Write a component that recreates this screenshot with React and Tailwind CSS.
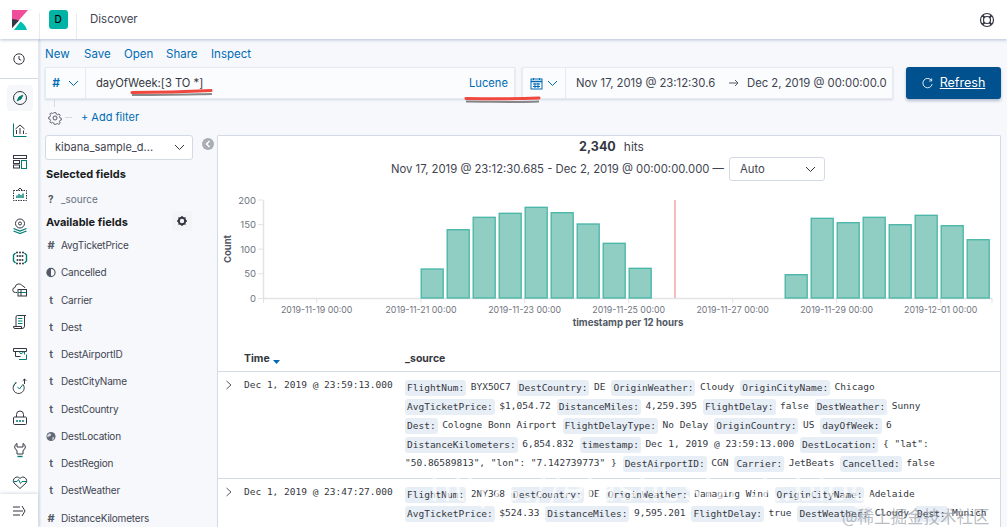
import React from "react";

const D = "#343741";
const T = "#017d73";

const I = ({ children, active }) => (
  <div className="w-[39px] h-[32px] flex items-center justify-center shrink-0">
    <div className={"w-[26px] h-[26px] rounded flex items-center justify-center " + (active ? "bg-[#f5f7fa]" : "")}>
      <svg width="16" height="16" viewBox="0 0 16 16" fill="none" stroke={D} strokeWidth="1">{children}</svg>
    </div>
  </div>
);

const navIcons = [
  <><circle cx="8" cy="8" r="6.5" /><path d="M10.8 5.2 9 9 5.2 10.8 7 7z" fill={T} stroke={T} /></>,
  <><path d="M1.5 1.5v13h13" stroke={T} /><path d="M3.5 7 8 3l4.5 4" /><path d="M4.5 12V8M8 12V6M11.5 12V8.5M14 12v-1" /></>,
  <><rect x="1.5" y="1.5" width="13" height="3" /><rect x="1.5" y="6.5" width="6" height="3" /><rect x="1.5" y="11" width="6" height="3" /><rect x="9.5" y="6.5" width="5" height="8" stroke={T} /></>,
  <><rect x="1.5" y="4.5" width="13" height="10" strokeDasharray="1.5 1" /><path d="M5.5 4.5 8 2l2.5 2.5" /><path d="M5 12V9.5M7 12V8M9 12V9M11 12V7.5" stroke={T} strokeWidth="1.4" /></>,
  <><circle cx="8" cy="5.5" r="4.5" /><circle cx="8" cy="5.5" r="1.5" /><path d="M1.5 10.5 8 13l6.5-2.5M1.5 13 8 15.5l6.5-2.5" stroke={T} strokeWidth="1.3" /></>,
  <><path d="M3.5 3 1.5 5v6l2 2M12.5 3l2 2v6l-2 2" stroke={T} strokeWidth="1.4" /><path d="M5 2.5h.01M8 2.5h.01M11 2.5h.01M5.5 6h.01M8 6h.01M10.5 6h.01M5.5 10h.01M8 10h.01M10.5 10h.01M5 13.5h.01M8 13.5h.01M11 13.5h.01" strokeWidth="2" strokeLinecap="round" /></>,
  <><path d="M5 10.5H3.5a2.5 2.5 0 0 1-.5-5A4 4 0 0 1 10.5 4a3 3 0 0 1 2.5 2" /><rect x="6" y="7.5" width="8.5" height="6.5" /><path d="M6 10.5h8.5" stroke={T} /><path d="M9 7.5V14" /></>,
  <><path d="M4 12.5V3a1.5 1.5 0 0 1 1.5-1.5H14" /><path d="M12.5 1.5V12a2.5 2.5 0 0 1-2.5 2.5H3a1.5 1.5 0 0 1-1.5-1.5v-.5H9.5V14" /><path d="M6 4.5h4.5M6 7h4.5M6 9.5h4.5" stroke={T} /></>,
  <><path d="M1.5 2.5h13v3h-13z" /><path d="M3.5 5.5v5h5" /><path d="M12.5 5.5v3" stroke={T} /><path d="M7 5.5 9 8l3-2.5M7 13.5h7.5v-5" stroke={T} /></>,
  <><path d="M11 5.5a6 6 0 1 1-6.500-1.500" transform="translate(.5 1) scale(.93)" /><path d="M2 8a5 5 0 0 1 2-4" stroke={T} strokeDasharray="1.5 1.2" /><path d="M5.500 9 7.500 11l3-4" stroke={T} /><path d="M12.500 6V1M10.700 2.800l1.800-1.800 1.800 1.800" /></>,
  <><rect x="1.5" y="7" width="13" height="7.5" rx="1" /><path d="M4.5 7V4.5a3.5 3.5 0 0 1 7 0V7" /><path d="M5 11h.01M8 11h.01M11 11h.01" stroke={T} strokeWidth="2" strokeLinecap="round" /></>,
  <><path d="M5 1.5C2 3 2 7 5 8.5V12h6V8.5c3-1.5 3-5.5 0-7V5H5z" /><path d="M5.5 14.5h5" stroke={T} strokeWidth="1.4" /></>,
  <><path d="M8 14.5 2 9C-.5 5.5 4.5 .5 8 4.5 11.500 .5 16.500 5.500 14 9z" /><path d="M1.500 7.500H5l1.500-2 2 4 1.500-2h5" stroke={T} /></>,
];

const fields = [
  ["#", "AvgTicketPrice"], ["h", "Cancelled"], ["t", "Carrier"], ["t", "Dest"], ["t", "DestAirportID"], ["t", "DestCityName"],
  ["t", "DestCountry"], ["g", "DestLocation"], ["t", "DestRegion"], ["t", "DestWeather"], ["#", "DistanceKilometers"],
];

const FieldIcon = ({ k }) => {
  if (k === "h") return <svg width="11" height="11" viewBox="0 0 11 11"><circle cx="5.500" cy="5.500" r="4.500" fill="none" stroke="#535966" strokeWidth="1.300" /><path d="M5.500 1a4.500 4.500 0 0 0 0 9z" fill="#535966" /></svg>;
  if (k === "g") return <svg width="11" height="11" viewBox="0 0 11 11"><circle cx="5.500" cy="5.500" r="5" fill="#636976" /><path d="M3 2.500c2-1 3 0 2.500 1.500S3 5 2.500 6 1 5 1.500 4zM7 6.500l2-.5-.5 2.500L7 9.500z" fill="#d5d8de" /></svg>;
  return <span className={"text-[11px] leading-none text-[#535966] " + (k === "#" ? "font-bold" : "font-semibold")}>{k}</span>;
};

const bars = [
  [420.7, 269], [446.7, 229.7], [472.7, 217.3], [498.7, 213.3], [524.7, 207.3], [550.7, 212.7], [576.7, 224], [602.7, 243.3], [628.7, 268.3],
  [784.7, 274.7], [810.7, 218.3], [836.7, 222.7], [862.7, 217.3], [888.7, 224.7], [914.7, 215.3], [940.7, 225.7], [966.7, 239.7],
];
const xt = [[316.7, "2019-11-19 00:00"], [421, "2019-11-21 00:00"], [524.7, "2019-11-23 00:00"], [628.7, "2019-11-25 00:00"], [732.7, "2019-11-27 00:00"], [836.7, "2019-11-29 00:00"], [940.7, "2019-12-01 00:00"]];
const yt = [[200, "200"], [224.600, "150"], [249.200, "100"], [273.800, "50"], [298.500, "0"]];

const Chart = () => (
  <svg width="782" height="150" viewBox="218 190 782 150" className="block" style={{ fontFamily: "Inter, sans-serif" }}>
    <text transform="translate(231,249) rotate(-90)" textAnchor="middle" fontSize="9.500" fontWeight="700" fill="#535966">Count</text>
    {yt.map(([y, l]) => (
      <g key={l}>
        <text x="256" y={y + 3.500} textAnchor="end" fontSize="9.500" fill="#6f7480">{l}</text>
        <path d={`M258 ${y}h5`} stroke="#e3e3e3" />
      </g>
    ))}
    <path d="M263.500 200v98.500H992" stroke="#e3e3e3" strokeWidth="1.500" fill="none" />
    {xt.map(([x, l]) => (
      <g key={l}>
        <path d={`M${x} 298v5`} stroke="#e3e3e3" />
        <text x={x} y="312.500" textAnchor="middle" fontSize="8.800" fill="#6f7480">{l}</text>
      </g>
    ))}
    <path d="M263.500 298v5M992 298v5" stroke="#e3e3e3" />
    {bars.map(([x, t]) => (
      <rect key={x} x={x + 0.500} y={t} width="22" height={298 - t} fill="#90cdc3" stroke="#47b5a7" strokeWidth="1.300" />
    ))}
    <rect x="674" y="200" width="2" height="98" fill="#f4bcbc" />
    <text x="628" y="326" textAnchor="middle" fontSize="9.700" fontWeight="700" fill="#535966">timestamp per 12 hours</text>
  </svg>
);

const Line = ({ items }) => (
  <div className="flex items-center h-[19px] whitespace-pre">
    {items.map((it, i) =>
      it[0] === "" ? (
        <span key={i} className="mr-[6px]">{it[1]}</span>
      ) : (
        <React.Fragment key={i}>
          <span className="bg-[#e8eef5] rounded-[3px] px-[2px] h-[16px] leading-[16px] mr-[4.500px] text-[#343741]">{it[0]}:</span>
          {it[1] && <span className="mr-[6px]">{it[1]}</span>}
        </React.Fragment>
      )
    )}
  </div>
);

const row1 = [
  [["FlightNum", "BYX5OC7"], ["DestCountry", "DE"], ["OriginWeather", "Cloudy"], ["OriginCityName", "Chicago"]],
  [["AvgTicketPrice", "$1,054.72"], ["DistanceMiles", "4,259.395"], ["FlightDelay", "false"], ["DestWeather", "Sunny"]],
  [["Dest", "Cologne Bonn Airport"], ["FlightDelayType", "No Delay"], ["OriginCountry", "US"], ["dayOfWeek", "6"]],
  [["DistanceKilometers", "6,854.832"], ["timestamp", "Dec 1, 2019 @ 23:59:13.000"], ["DestLocation", '{ "lat":']],
  [["", '"50.86589813", "lon": "7.142739773" }'], ["DestAirportID", "CGN"], ["Carrier", "JetBeats"], ["Cancelled", "false"]],
];
const row2 = [
  [["FlightNum", "2NY3G8"], ["DestCountry", "DE"], ["OriginWeather", "Damaging Wind"], ["OriginCityName", "Adelaide"]],
  [["AvgTicketPrice", "$524.33"], ["DistanceMiles", "9,595.201"], ["FlightDelay", "true"], ["DestWeather", "Cloudy"], ["Dest", "Munich"]],
];

const Row = ({ time, lines, cls }) => (
  <div className={"flex " + cls} style={{ fontFamily: "'DejaVu Sans Mono', monospace" }}>
    <div className="w-[26px] shrink-0 pl-[7px] pt-[8px]">
      <svg width="8" height="10" viewBox="0 0 8 10" fill="none" stroke="#535966"><path d="M1.500 1 6 5 1.500 9" /></svg>
    </div>
    <div className="w-[161px] shrink-0 pt-[6px] leading-[14px]">{time}</div>
    <div className="pt-[6px] flex-1 min-w-0">
      {lines.map((l, i) => <Line key={i} items={l} />)}
    </div>
  </div>
);

const Chev = ({ c }) => (
  <svg width="11" height="7" viewBox="0 0 11 7" fill="none" stroke={c} className="shrink-0"><path d="M1 1l4.500 4.500L10 1" /></svg>
);

export default function App() {
  return (
    <div className="relative w-[1007px] h-[527px] overflow-hidden flex flex-col bg-[#f6f8fc] text-[#343741]" style={{ fontFamily: "Inter, 'Noto Sans CJK SC', sans-serif" }}>
      <header className="h-[39px] shrink-0 bg-white flex items-stretch shadow-[0_1px_3px_rgba(100,120,160,0.45)] relative z-10">
        <div className="w-[39px] flex items-center justify-center">
          <svg width="16" height="20" viewBox="0 0 16 20">
            <path d="M0 0h16L0 18z" fill="#f04e98" />
            <path d="M0 9v9l7-7.500Q4 9.200 0 9z" fill="#343741" />
            <path d="M2 20 8.500 11.500Q13.500 14.500 15 20z" fill="#00bfb3" />
          </svg>
        </div>
        <div className="w-[38px] flex items-center justify-center border-x border-[#e6ebf2] mt-[13px]">
          <div className="w-[19px] h-[19px] -mt-[13px] rounded-[3px] bg-[#00b3a4] flex items-center justify-center text-[10px] font-medium text-black">D</div>
        </div>
        <div className="pl-[13px] flex items-center text-[11.500px] text-[#3f4450]">Discover</div>
        <div className="ml-auto mr-[12px] flex items-center">
          <svg width="16" height="16" viewBox="0 0 16 16" fill="none" stroke="#343741" strokeWidth="1.200">
            <circle cx="8" cy="8" r="6.500" /><circle cx="8" cy="8" r="3.500" />
            <path d="M3.500 3.500 5.500 5.500M12.500 3.500 10.500 5.500M3.500 12.500 5.500 10.500M12.500 12.500 10.500 10.500" strokeWidth="2" />
          </svg>
        </div>
      </header>

      <div className="flex-1 flex min-h-0">
        <aside className="relative w-[39px] shrink-0 bg-white border-r border-[#e4e8f0] flex flex-col shadow-[1px_0_2px_rgba(100,120,160,0.2)] z-[5]">
          <div className="h-[40px] shrink-0 flex items-center justify-center border-b border-[#d3dae6]">
            <svg width="12" height="12" viewBox="0 0 12 12" fill="none" stroke={D}><circle cx="6" cy="6" r="5.200" /><path d="M6 3v3.200l2.200 1" /></svg>
          </div>
          <div className="pt-[3px] flex flex-col">
            {navIcons.map((c, i) => <I key={i} active={i === 0}>{c}</I>)}
          </div>
          <div className="absolute bottom-0 left-0 w-[38px] h-[33px] bg-white flex items-center justify-center shadow-[0_-1px_3px_rgba(100,120,160,0.25)]">
            <svg width="14" height="12" viewBox="0 0 14 12" fill="none" stroke={D}><path d="M1 2h7M1 6h10M1 10h7M10 1l3 5-3 5" /></svg>
          </div>
        </aside>

        <main className="flex-1 min-w-0 flex flex-col pl-[6px] pr-[6px]">
          <nav className="h-[28px] shrink-0 flex items-end pb-[5px] text-[11.500px] text-[#006bb4] leading-[16px]">
            <span className="w-[39px]">New</span><span className="w-[40px]">Save</span><span className="w-[42px]">Open</span><span className="w-[45px]">Share</span><span>Inspect</span>
          </nav>

          <div className="h-[32px] shrink-0 flex">
            <div className="w-[470px] flex bg-[#fbfcfd] border border-[#e6eaf1] shadow-[0_1px_2px_rgba(100,120,160,0.25)]">
              <div className="w-[40px] shrink-0 flex items-center justify-center gap-[8px] border-r border-[#e6eaf1] text-[#006bb4] text-[12px] font-semibold">
                <span>#</span>
                <Chev c="#006bb4" />
              </div>
              <div className="flex-1 pl-[10px] flex items-center text-[11.200px]">dayOfWeek:[3 TO *]</div>
              <div className="pr-[6px] flex items-center text-[11.200px] text-[#006bb4]">Lucene</div>
            </div>
            <div className="ml-[7px] w-[371px] flex bg-[#fbfcfd] border border-[#e6eaf1] shadow-[0_1px_2px_rgba(100,120,160,0.25)]">
              <div className="w-[43px] shrink-0 flex items-center justify-center gap-[4px] border-r border-[#e6eaf1]">
                <svg width="13" height="13" viewBox="0 0 13 13" fill="none" stroke="#006bb4"><rect x="1" y="2" width="11" height="10" /><path d="M1 4.500h11" strokeWidth="1.500" /><path d="M3.500 1v2M9.500 1v2M3 7h7M3 9.500h7M5 6v5M8 6v5" /></svg>
                <Chev c="#006bb4" />
              </div>
              <div className="flex-1 flex items-center pl-[10px] text-[11.300px] text-[#3f4450] whitespace-nowrap">
                <span className="w-[145px] shrink-0">Nov 17, 2019 @ 23:12:30.6</span>
                <svg className="ml-[8px] shrink-0" width="10" height="8" viewBox="0 0 10 8" fill="none" stroke="#535966"><path d="M0 4h9M6 1l3 3-3 3" /></svg>
                <span className="ml-[8px]">Dec 2, 2019 @ 00:00:00.0</span>
              </div>
            </div>
            <div className="ml-[13px] w-[95px] rounded-[3px] bg-[#01518f] text-white flex items-center justify-center gap-[7px] text-[12.500px] shadow-[0_2px_3px_rgba(60,80,120,0.35)]">
              <svg width="11" height="11" viewBox="0 0 11 11" fill="none" stroke="#dce9f3"><path d="M9.500 2.500A4.700 4.700 0 1 0 10.200 6" /><path d="M9.700.5v2.500H7.200" /></svg>
              <span className="underline">Refresh</span>
            </div>
          </div>

          <div className="h-[36px] shrink-0 flex items-start relative">
            <div className="absolute left-[9px] top-0 w-px h-[8px] bg-[#d3dae6]" />
            <svg className="ml-[3px] mt-[12px]" width="14" height="14" viewBox="0 0 14 14" fill="none" stroke="#535966"><circle cx="7" cy="7" r="2" /><path d="M6 1h2l.4 1.700 1.500.7 1.500-.9 1.400 1.400-.9 1.500.6 1.500 1.500.4v2l-1.500.4-.6 1.500.9 1.500-1.400 1.400-1.500-.9-1.500.6L8 14H6l-.4-1.500-1.500-.6-1.500.9-1.400-1.400.9-1.500-.6-1.500L0 8V6l1.500-.4.6-1.500-.9-1.500 1.400-1.400 1.500.9 1.500-.7z" transform="translate(.7 .7) scale(.9)" /></svg>
            <div className="ml-[3px] mt-[18px] w-[7px] h-px bg-[#d3dae6]" />
            <span className="ml-[9px] mt-[10px] text-[11px] leading-[16px] text-[#006bb4]">+ Add filter</span>
          </div>

          <div className="flex-1 min-h-0 flex">
            <div className="relative w-[172px] shrink-0">
              <div className="w-[148px] h-[25px] bg-white border border-[#d3dae6] rounded-[3px] flex items-center justify-between pl-[9px] pr-[7px] text-[11px] text-[#3f4450]">
                <span>kibana_sample_d...</span>
                <Chev c="#343741" />
              </div>
              <div className="absolute left-[157px] top-[3px] w-[12px] h-[12px] rounded-full bg-[#a9adb5] flex items-center justify-center">
                <svg width="6" height="8" viewBox="0 0 6 8" fill="none" stroke="#fff" strokeWidth="1.500"><path d="M4.500 1 1.500 4l3 3" /></svg>
              </div>
              <div className="mt-[6px] pl-[1px] h-[17px] text-[11px] leading-[17px] font-bold text-[#1a1c21]">Selected fields</div>
              <div className="mt-[8px] flex items-center h-[16px] text-[10px] text-[#69707d]">
                <span className="w-[16px] pl-[3px] text-[#535966] font-bold">?</span>_source
              </div>
              <div className="relative mt-[7px] pl-[1px] h-[17px] text-[11px] leading-[17px] font-bold text-[#1a1c21]">
                Available fields
                <div className="absolute left-[127px] top-[-3px] w-[20px] h-[20px] bg-[#f2f4f8] flex items-center justify-center rounded-[2px]">
                  <svg width="10" height="10" viewBox="0 0 10 10"><circle cx="5" cy="5" r="3.200" fill="none" stroke="#343741" strokeWidth="2" /><path d="M5 0v2M5 8v2M0 5h2M8 5h2M1.500 1.500l1.500 1.500M7 7l1.500 1.500M8.500 1.500 7 3M3 7 1.500 8.500" stroke="#343741" strokeWidth="1.300" /></svg>
                </div>
              </div>
              <div className="mt-[1px]">
                {fields.map(([k, n]) => (
                  <div key={n} className="h-[27.250px] flex items-center text-[10px] tracking-[-0.2px] text-[#3f4450]">
                    <span className="w-[16px] flex justify-center pl-[1px] pr-[5px]"><FieldIcon k={k} /></span>{n}
                  </div>
                ))}
              </div>
            </div>

            <section className="flex-1 min-w-0 bg-white border border-[#d3dae6] border-b-0 rounded-t-[2px] overflow-hidden">
              <div className="h-[4px]" />
              <div className="flex justify-center items-baseline gap-[8px] h-[14px] leading-[14px] pl-[5px] text-[12px]">
                <b className="font-bold text-[12.500px]">2,340</b><span className="text-[#3f4450]">hits</span>
              </div>
              <div className="mt-[3px] h-[24px] flex items-center pl-[173px] whitespace-nowrap text-[11.300px] text-[#3f4450]">
                <span className="w-[335px] shrink-0">Nov 17, 2019 @ 23:12:30.685 - Dec 2, 2019 @ 00:00:00.000 —</span>
                <div className="ml-[3px] w-[96px] h-[24px] bg-white border border-[#d3dae6] rounded-[3px] flex items-center justify-between pl-[10px] pr-[8px]">
                  <span>Auto</span>
                  <Chev c="#343741" />
                </div>
              </div>
              <div className="mt-[9px]"><Chart /></div>
              <div className="h-[32px] flex items-end border-b border-[#d3dae6] pb-[5px] text-[10.500px] font-bold text-[#343741] leading-[14px]">
                <span className="ml-[26px] w-[161px] flex items-center gap-[3px]">Time <svg width="7" height="4" viewBox="0 0 7 4" className="mt-[5px]"><path d="M0 0h7L3.500 4z" fill="#006bb4" /></svg></span>
                <span>_source</span>
              </div>
              <div className="text-[9.500px] text-[#343741]">
                <Row time="Dec 1, 2019 @ 23:59:13.000" lines={row1} cls="h-[107px] border-b border-[#d3dae6]" />
                <Row time="Dec 1, 2019 @ 23:47:27.000" lines={row2} cls="" />
              </div>
            </section>
          </div>
        </main>
      </div>

      {/* hand-drawn red marks and image watermarks lying over the page */}
      <svg className="absolute left-0 top-0 pointer-events-none" width="1007" height="527" viewBox="0 0 1007 527">
        <path d="M132 95c25 0 50-.5 80-1" stroke="#3c3c3c" strokeOpacity=".6" strokeWidth="2" fill="none" />
        <path d="M132 92.500c25 0 50-.5 79-2" stroke="#f0483e" strokeWidth="3" strokeLinecap="round" fill="none" />
        <path d="M466 101.500c25 0 50 1 73 0" stroke="#3c3c3c" strokeOpacity=".6" strokeWidth="2" fill="none" />
        <path d="M466 98.500c25 .5 50 .5 73-.5" stroke="#f0483e" strokeWidth="3" strokeLinecap="round" fill="none" />
      </svg>
      <div className="absolute left-[430px] top-[466px] text-[37px] leading-[44px] text-white/70 whitespace-nowrap tracking-[1px] pointer-events-none">https://elasticstack.blog</div>
      <div className="absolute left-[842px] top-[505px] text-[16.500px] leading-[22px] text-[#8a8f99]/60 whitespace-nowrap pointer-events-none" style={{ fontFamily: "'Noto Sans CJK SC', sans-serif" }}>@稀土掘金技术社区</div>
    </div>
  );
}
